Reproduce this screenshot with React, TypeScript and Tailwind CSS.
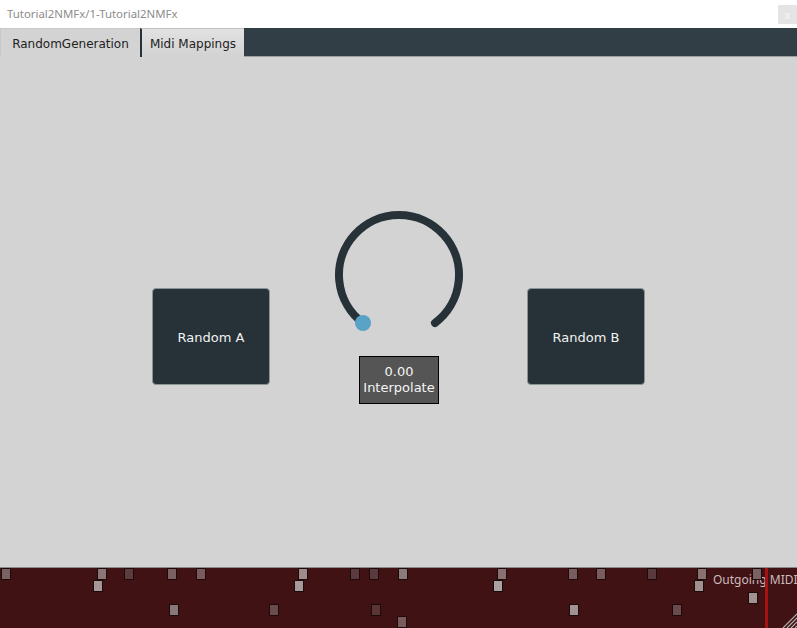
import React from "react";

const squares: { x: number; y: number; c: string }[] = [
  { x: 1, y: 568, c: "#7a6262" },
  { x: 97, y: 568, c: "#8e7676" },
  { x: 124, y: 568, c: "#5c3c3e" },
  { x: 167, y: 568, c: "#7a6060" },
  { x: 196, y: 568, c: "#7a5a5c" },
  { x: 298, y: 568, c: "#a08a8a" },
  { x: 350, y: 568, c: "#5a3a3c" },
  { x: 369, y: 568, c: "#5a3a3c" },
  { x: 398, y: 568, c: "#8c7a7a" },
  { x: 497, y: 568, c: "#8a7070" },
  { x: 568, y: 568, c: "#7a5c5e" },
  { x: 596, y: 568, c: "#7a5c5e" },
  { x: 647, y: 568, c: "#5a3a3c" },
  { x: 697, y: 568, c: "#8a7070" },
  { x: 752, y: 568, c: "#7a6262" },
  { x: 93, y: 580, c: "#a69696" },
  { x: 294, y: 580, c: "#a89a9a" },
  { x: 493, y: 580, c: "#aaa2a2" },
  { x: 694, y: 580, c: "#a29090" },
  { x: 748, y: 592, c: "#a29292" },
  { x: 169, y: 604, c: "#8a7878" },
  { x: 269, y: 604, c: "#6a4c4c" },
  { x: 371, y: 604, c: "#5a3536" },
  { x: 569, y: 604, c: "#a29292" },
  { x: 672, y: 604, c: "#6a4a4c" },
  { x: 397, y: 616, c: "#7a5a5c" },
];

function Knob() {
  return (
    <svg width="140" height="140" viewBox="0 0 140 140">
      <path
        d="M34 118 A60 60 0 1 1 106 118"
        fill="none"
        stroke="#263238"
        strokeWidth="8"
        strokeLinecap="round"
      />
      <circle cx="34" cy="118" r="8" fill="#58a3c6" />
    </svg>
  );
}

function BigButton({ label }: { label: string }) {
  return (
    <div className="mt-[83px] flex h-[97px] w-[118px] items-center justify-center rounded-[4px] border border-[#8a9396] bg-[#263238] pt-[2px] text-[13px] text-[#f2f2f2] [font-family:'DejaVu_Sans',sans-serif]">
      {label}
    </div>
  );
}

export default function App() {
  return (
    <div className="flex h-[628px] w-[797px] flex-col overflow-hidden bg-[#d3d3d3]">
      {/* title bar */}
      <div className="relative flex h-[28px] shrink-0 items-center bg-white pl-[7px] text-[11.4px] text-[#8c8c8c] [font-family:'Noto_Sans',sans-serif]">
        Tutorial2NMFx/1-Tutorial2NMFx
        <div className="absolute right-0 top-[5px] flex h-[19px] w-[19px] items-center justify-center bg-[#e4e4e4] text-[11px] leading-none text-[#f6f6f6]">
          x
        </div>
      </div>
      {/* tab bar */}
      <div className="flex h-[29px] shrink-0 border-b border-[#9aa0a3] bg-[#323e45] text-[12px] text-[#222] [font-family:'DejaVu_Sans',sans-serif]">
        <div className="flex h-[29px] w-[140px] items-center justify-center border-l border-t border-[#c8c8c8] bg-[#d3d3d3] pt-[1px]">
          RandomGeneration
        </div>
        <div className="flex h-[29px] w-[104px] items-center justify-center border-l-2 border-t border-l-[#2a3238] border-t-[#c0c0c0] bg-gradient-to-b from-[#e2e2e2] to-[#d2d2d2] pt-[1px]">
          Midi Mappings
        </div>
      </div>
      {/* content */}
      <div className="flex flex-1 items-start pl-[152px] pt-[148px]">
        <BigButton label="Random A" />
        <div className="ml-[59px] flex flex-col items-center">
          <Knob />
          <div className="mt-[11px] flex h-[48px] w-[80px] flex-col items-center justify-center border border-black bg-[#555555] text-[13px] leading-[16px] text-[#f4f4f4] [font-family:'DejaVu_Sans',sans-serif]">
            <span>0.00</span>
            <span>Interpolate</span>
          </div>
        </div>
        <div className="ml-[58px]">
          <BigButton label="Random B" />
        </div>
      </div>
      {/* midi panel */}
      <div className="relative h-[61px] shrink-0 border-t border-[#8a8a8a] bg-[#401214]">
        <div className="absolute left-[713px] top-[3px] whitespace-nowrap text-[12px] text-[#cdbcbc] [font-family:'Noto_Sans',sans-serif]">
          Outgoing MIDI
        </div>
        <div className="absolute bottom-0 left-[765px] top-0 w-[3px] bg-[#a51212]" />
        {squares.map((s, i) => (
          <div
            key={i}
            className="absolute h-[12px] w-[10px] border border-[#1a0a0a]"
            style={{ left: s.x, top: s.y - 568, backgroundColor: s.c }}
          />
        ))}
        <svg className="absolute bottom-0 right-0" width="18" height="18" viewBox="0 0 18 18">
          <line x1="4" y1="18" x2="18" y2="4" stroke="#b0b0b0" strokeWidth="1.2" />
          <line x1="8" y1="18" x2="18" y2="8" stroke="#b0b0b0" strokeWidth="1.2" />
          <line x1="12" y1="18" x2="18" y2="12" stroke="#b0b0b0" strokeWidth="1.2" />
          <line x1="16" y1="18" x2="18" y2="16" stroke="#b0b0b0" strokeWidth="1.2" />
        </svg>
      </div>
    </div>
  );
}
